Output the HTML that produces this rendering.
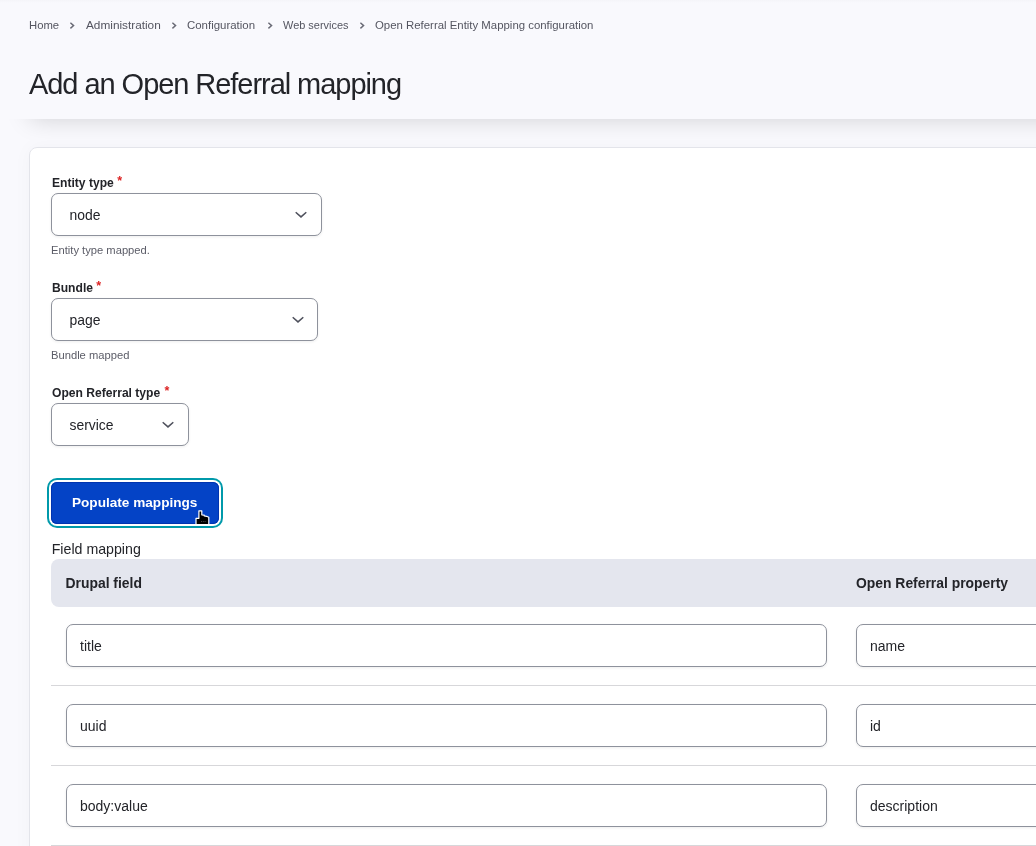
<!DOCTYPE html>
<html>
<head>
<meta charset="utf-8">
<style>
html,body{margin:0;padding:0;}
body{width:1036px;height:846px;overflow:hidden;background:#f9f9fd;position:relative;font-family:"Liberation Sans",sans-serif;color:#232429;}
.root{position:absolute;left:0;top:0;width:1036px;height:846px;overflow:hidden;will-change:transform;}
.abs{position:absolute;white-space:nowrap;}
.header{position:absolute;left:0;top:0;width:1100px;height:119px;background:linear-gradient(#f5f5f9,#f9f9fd 3px);box-shadow:0 30px 24px -30px rgba(0,0,0,0.17);}
.bc{font-size:11.3px;color:#545560;line-height:14px;top:18px;}
.chev{position:absolute;top:22px;}
h1{margin:0;position:absolute;left:29px;top:66px;font-weight:normal;font-size:29px;letter-spacing:-1.05px;line-height:36px;color:#232429;white-space:nowrap;}
.card{position:absolute;left:29px;top:147px;width:1100px;height:800px;background:#fff;border:1px solid #e3e4ea;border-radius:8px;box-sizing:border-box;box-shadow:0 0 20px rgba(0,0,40,0.03);}
.lbl{font-size:12.1px;font-weight:bold;line-height:14px;color:#232429;}
.req{color:#dc2323;font-size:12.5px;position:relative;top:-2px;}
.sel{position:absolute;left:51px;height:43px;border:1px solid #8e929c;border-radius:7px;box-sizing:border-box;background:#fff;box-shadow:0 1px 3px rgba(0,0,0,0.07);}
.sel span{position:absolute;left:17.5px;top:13px;font-size:13.9px;line-height:16px;color:#232429;}
.sel svg{position:absolute;top:17px;}
.desc{font-size:11.2px;line-height:14px;color:#5b5c67;}
.btn{position:absolute;left:51px;top:482px;width:168px;height:42px;background:#0443c6;border-radius:6px;box-shadow:inset 0 0 0 1px #0034b0,0 0 0 2px #fff,0 0 0 4px #0099aa;}
.btn span{position:absolute;left:21px;top:13px;font-size:13.6px;font-weight:bold;color:#fff;line-height:16px;}
.thead{position:absolute;left:51px;top:559px;width:1000px;height:48px;background:#e4e6ee;border-radius:8px 0 0 8px;}
.th{font-size:13.9px;font-weight:bold;line-height:16px;top:16px;}
.inp{position:absolute;height:43px;border:1px solid #8e929c;border-radius:7px;box-sizing:border-box;background:#fff;box-shadow:0 1px 3px rgba(0,0,0,0.07);}
.inp span{position:absolute;left:13px;top:13px;font-size:14px;line-height:16px;color:#232429;}
.sep{position:absolute;left:51px;width:1000px;height:1px;background:#d7d7da;}
</style>
</head>
<body>
<div class="root">
<div class="header"></div>

<div class="abs bc" style="left:29px">Home</div>
<svg class="chev" style="left:69.3px" width="7" height="8" viewBox="0 0 7 8"><path d="M1.4 0.8L4.6 3.6 1.4 6.4" fill="none" stroke="#696a75" stroke-width="1.4"/></svg>
<div class="abs bc" style="left:86px;font-size:11.8px">Administration</div>
<svg class="chev" style="left:170.6px" width="7" height="8" viewBox="0 0 7 8"><path d="M1.4 0.8L4.6 3.6 1.4 6.4" fill="none" stroke="#696a75" stroke-width="1.4"/></svg>
<div class="abs bc" style="left:187px;font-size:11.45px">Configuration</div>
<svg class="chev" style="left:266.6px" width="7" height="8" viewBox="0 0 7 8"><path d="M1.4 0.8L4.6 3.6 1.4 6.4" fill="none" stroke="#696a75" stroke-width="1.4"/></svg>
<div class="abs bc" style="left:283px;font-size:10.95px">Web services</div>
<svg class="chev" style="left:359.2px" width="7" height="8" viewBox="0 0 7 8"><path d="M1.4 0.8L4.6 3.6 1.4 6.4" fill="none" stroke="#696a75" stroke-width="1.4"/></svg>
<div class="abs bc" style="left:375px;font-size:11.4px">Open Referral Entity Mapping configuration</div>

<h1>Add an Open Referral mapping</h1>

<div class="card"></div>

<div class="abs lbl" style="left:52px;top:176px">Entity type <span class="req">*</span></div>
<div class="sel" style="top:193px;width:271px"><span>node</span>
<svg style="left:243px" width="14" height="8" viewBox="0 0 14 8"><path d="M0.7 1.2L6 5.9 11.3 1.2" fill="none" stroke="#4e505c" stroke-width="1.5"/></svg></div>
<div class="abs desc" style="left:51px;top:243px">Entity type mapped.</div>

<div class="abs lbl" style="left:52px;top:281px">Bundle <span class="req">*</span></div>
<div class="sel" style="top:298px;width:267px"><span>page</span>
<svg style="left:240px" width="14" height="8" viewBox="0 0 14 8"><path d="M0.7 1.2L6 5.9 11.3 1.2" fill="none" stroke="#4e505c" stroke-width="1.5"/></svg></div>
<div class="abs desc" style="left:51px;top:348px">Bundle mapped</div>

<div class="abs lbl" style="left:52px;top:386px">Open Referral type <span class="req" style="margin-left:1px">*</span></div>
<div class="sel" style="top:403px;width:138px"><span>service</span>
<svg style="left:109.5px" width="14" height="8" viewBox="0 0 14 8"><path d="M0.7 1.2L6 5.9 11.3 1.2" fill="none" stroke="#4e505c" stroke-width="1.5"/></svg></div>

<div class="btn"><span>Populate mappings</span></div>
<svg style="position:absolute;left:194px;top:509px" width="17" height="18" viewBox="0 0 17 18"><path d="M2 9.3H4.9V1.8H7.8V5.8L10.2 6.1V6.8L12.6 7.3L14.8 8.3V15.6H2Z" fill="#000" stroke="#fff" stroke-width="1.2" stroke-linejoin="round"/><path d="M7 12.5h5.5" stroke="#777" stroke-width="0.6" stroke-dasharray="1 0.8"/></svg>

<div class="abs" style="left:51.7px;top:541px;font-size:14.2px;line-height:16px;color:#232429">Field mapping</div>

<div class="thead">
  <div class="abs th" style="left:14.5px">Drupal field</div>
  <div class="abs th" style="left:805px">Open Referral property</div>
</div>

<div class="inp" style="left:66px;top:624px;width:761px"><span>title</span></div>
<div class="inp" style="left:856px;top:624px;width:300px"><span>name</span></div>
<div class="sep" style="top:685px"></div>
<div class="inp" style="left:66px;top:704px;width:761px"><span>uuid</span></div>
<div class="inp" style="left:856px;top:704px;width:300px"><span>id</span></div>
<div class="sep" style="top:765px"></div>
<div class="inp" style="left:66px;top:784px;width:761px"><span>body:value</span></div>
<div class="inp" style="left:856px;top:784px;width:300px"><span>description</span></div>
<div class="sep" style="top:845px"></div>

</div>
</body>
</html>
